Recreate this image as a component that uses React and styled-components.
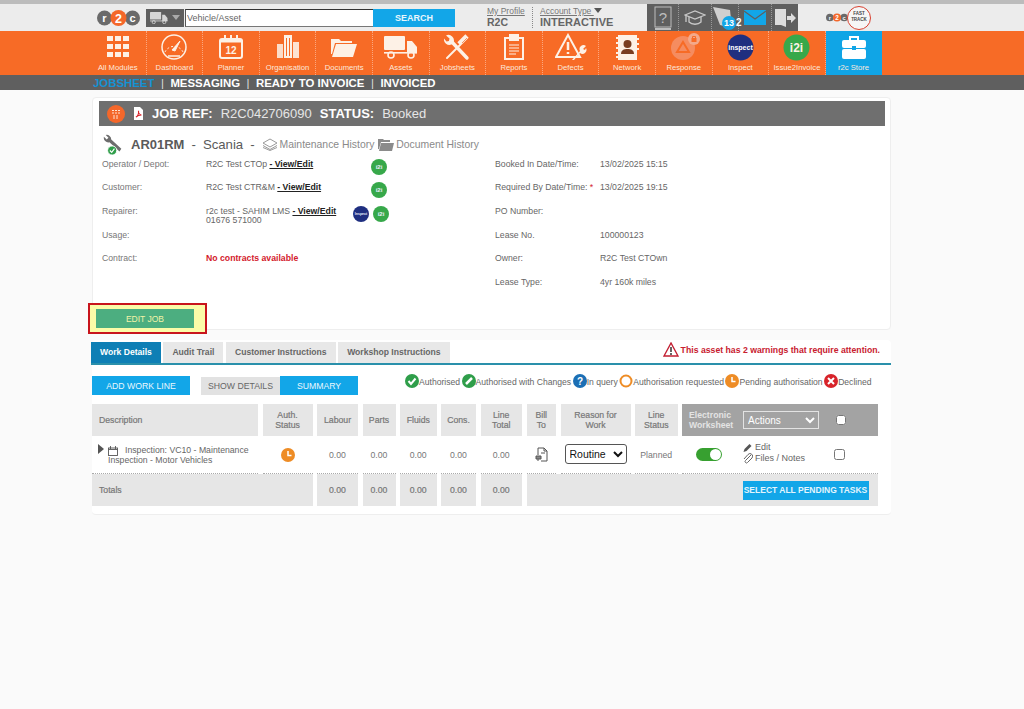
import styled, { createGlobalStyle } from "styled-components";

const GlobalStyle = createGlobalStyle`
  body {
    margin: 0;
    background: #fafafa;
    font-family: "Liberation Sans", Arial, sans-serif;
    color: #666;
  }
`;

//MARK --> drawn icons
const Logo = ({ small }) => (
  <svg width={small ? 22 : 43} height={small ? 9 : 16} viewBox="0 0 86 32">
    <circle cx="15" cy="16" r="15" fill="#6a6a6a" />
    <circle cx="71" cy="16" r="15" fill="#6a6a6a" />
    <circle cx="43" cy="16" r="16" fill="#f4672a" />
    <text x="15" y="24" fontSize="22" fontWeight="700" fill="#fff" textAnchor="middle">r</text>
    <text x="43" y="25" fontSize="25" fontWeight="700" fill="#fff" textAnchor="middle">2</text>
    <text x="71" y="24" fontSize="22" fontWeight="700" fill="#fff" textAnchor="middle">c</text>
  </svg>
);

const TruckIcon = ({ width = 34, fill = "#fdf1e6" }) => (
  <svg width={width} height={(width * 26) / 34} viewBox="0 0 34 26">
    <rect x="0" y="2" width="21" height="14" rx="1" fill={fill} />
    <path d="M23 7h5l5 6v6H23z" fill={fill} />
    <rect x="0" y="18" width="33" height="1.6" fill={fill} />
    <circle cx="7" cy="21" r="3" fill="none" stroke={fill} strokeWidth="1.6" />
    <circle cx="27" cy="21" r="3" fill="none" stroke={fill} strokeWidth="1.6" />
  </svg>
);

const icons = {
  modules: (
    <svg width="26" height="26" viewBox="0 0 26 26" fill="#fdf1e6">
      {[2, 10, 18].map((y) =>
        [2, 10, 18].map((x) => <rect key={`${x}-${y}`} x={x} y={y} width="6" height="5" />)
      )}
    </svg>
  ),
  gauge: (
    <svg width="28" height="28" viewBox="0 0 28 28" fill="none" stroke="#fdf1e6">
      <circle cx="14" cy="14" r="12" strokeWidth="1.5" />
      <path d="M5 19a10 10 0 0 1 18 0" strokeWidth="1" strokeDasharray="2 2" />
      <path d="M12 17l8-9-5 10z" fill="#fdf1e6" />
      <path d="M8 23h12" strokeWidth="1.5" />
    </svg>
  ),
  planner: (
    <svg width="26" height="26" viewBox="0 0 26 26" fill="none" stroke="#fdf1e6">
      <rect x="2" y="5" width="22" height="19" rx="2" strokeWidth="2" />
      <path d="M2 8h22V6H2z" fill="#fdf1e6" />
      <path d="M7 1v6M13 1v6M19 1v6" strokeWidth="2" />
      <text x="13" y="20" fontSize="10" fontWeight="700" fill="#fdf1e6" stroke="none" textAnchor="middle">12</text>
    </svg>
  ),
  organisation: (
    <svg width="26" height="26" viewBox="0 0 26 26" fill="#fdf1e6">
      <rect x="9" y="1" width="8" height="23" />
      <rect x="2" y="10" width="6" height="14" opacity="0.85" />
      <rect x="18" y="8" width="6" height="16" opacity="0.9" />
      <path d="M11 4h1v18h-1zM14 4h1v18h-1z" fill="#f76b26" />
    </svg>
  ),
  folder: (
    <svg width="28" height="26" viewBox="0 0 28 26" fill="#fdf1e6">
      <path d="M1 5h8l2 2h11v2H5L2 20H1z" />
      <path d="M6 10h21l-4 13H2z" />
    </svg>
  ),
  truck: <TruckIcon />,
  tools: (
    <svg width="26" height="27" viewBox="0 0 26 27" fill="none" stroke="#fdf1e6">
      <path d="M7 7l16 17" strokeWidth="3.4" strokeLinecap="round" />
      <path d="M2 1.500l3.500 3-.5 2.500-2.500.5L0 4.500a5.500 5.500 0 0 0 7.500 6l2-2A5.500 5.500 0 0 0 2 1.500z" fill="#fdf1e6" stroke="none" />
      <path d="M3 24L16 11" strokeWidth="2" strokeLinecap="round" />
      <path d="M15 10l8-8" strokeWidth="4.600" />
      <path d="M18 9l5-5" stroke="#f76b26" strokeWidth="0.7" />
    </svg>
  ),
  clipboard: (
    <svg width="24" height="27" viewBox="0 0 24 27" fill="none" stroke="#fdf1e6" strokeWidth="2">
      <rect x="3" y="4" width="18" height="21" />
      <path d="M8 1h8v5H8z" fill="#fdf1e6" />
      <path d="M7 11h10M7 14h10M7 17h10M7 20h7" strokeWidth="1" />
    </svg>
  ),
  defects: (
    <svg width="32" height="28" viewBox="0 0 32 28" fill="none" stroke="#fdf1e6">
      <path d="M13 2L1 24h24z" strokeWidth="2" />
      <path d="M13 9v8M13 19v2" strokeWidth="2.5" />
      <path d="M17 27l8-9a4 4 0 0 1 6-5l-3 3 2 1 1-2a4 4 0 0 1-6 5l-6 7z" fill="#fdf1e6" stroke="none" />
    </svg>
  ),
  network: (
    <svg width="24" height="27" viewBox="0 0 24 27">
      <rect x="3" y="1" width="19" height="25" fill="#fdf1e6" />
      <path d="M1 4h4M1 9h4M1 14h4M1 19h4M1 23h4M21 5h3M21 10h3M21 15h3" stroke="#fdf1e6" strokeWidth="2" />
      <circle cx="12.5" cy="10" r="4" fill="#7a3d20" />
      <path d="M6 20c0-4 3-5 6.5-5s6.5 1 6.5 5z" fill="#7a3d20" />
    </svg>
  ),
  response: (
    <svg width="36" height="28" viewBox="0 0 36 28">
      <circle cx="17" cy="15" r="12" fill="#f58c60" />
      <path d="M17 9l6 10H11z" fill="none" stroke="#f76b26" strokeWidth="2" />
      <circle cx="28" cy="6" r="6" fill="#f3a98a" />
      <rect x="25.5" y="5" width="5" height="4" fill="#f76b26" />
      <path d="M26.5 5V3.5h3V5" fill="none" stroke="#f76b26" />
    </svg>
  ),
  inspect: (
    <svg width="27" height="27" viewBox="0 0 27 27">
      <circle cx="13.5" cy="13.5" r="13" fill="#1f2f80" />
      <text x="13.5" y="16" fontSize="7" fontWeight="700" fill="#fff" textAnchor="middle">inspect</text>
    </svg>
  ),
  i2i: (
    <svg width="27" height="27" viewBox="0 0 27 27">
      <circle cx="13.5" cy="13.5" r="13" fill="#37a84a" />
      <text x="13.5" y="18" fontSize="12" fontWeight="700" fill="#fdf1e6" textAnchor="middle">i2i</text>
    </svg>
  ),
  store: (
    <svg width="26" height="26" viewBox="0 0 26 26" fill="#fff">
      <path d="M9 6V3h8v3" fill="none" stroke="#fff" strokeWidth="2" />
      <rect x="1" y="6" width="24" height="8" rx="2" />
      <rect x="1" y="15" width="24" height="10" rx="2" />
      <rect x="11" y="12" width="4" height="4" fill="#10a5e6" />
    </svg>
  ),
};

const BookIcon = () => (
  <svg width="18" height="24" viewBox="0 0 18 24" fill="none" stroke="#bdbdbd">
    <rect x="1" y="1" width="16" height="20" />
    <path d="M1 23h16" strokeWidth="2" />
    <text x="9" y="17" fontSize="15" fill="#bdbdbd" stroke="none" textAnchor="middle">?</text>
  </svg>
);

const CapIcon = () => (
  <svg width="22" height="16" viewBox="0 0 22 16" fill="none" stroke="#c9c9c9" strokeWidth="1.3">
    <path d="M1 5l10-4 10 4-10 4z" />
    <path d="M5 7v5c3 3 9 3 12 0V7M2 5v7" />
  </svg>
);

const DoorIcon = () => (
  <svg width="22" height="20" viewBox="0 0 22 20" fill="#ddd">
    <path d="M1 1h11v18l-5-2H1z" />
    <path d="M13 8h4V5l5 5-5 5v-3h-4z" />
  </svg>
);

const MailIcon = () => (
  <svg width="22" height="15" viewBox="0 0 22 15">
    <rect width="22" height="15" fill="#12a6e8" />
    <path d="M0 1l11 8 11-8" fill="none" stroke="#5f5f5f" strokeWidth="1.2" />
  </svg>
);

const MapIcon = () => (
  <svg width="20" height="24" viewBox="0 0 20 24" fill="#cfcfcf">
    <path d="M1 1l17 3 2 18-12-3z" />
  </svg>
);

const JobCalIcon = () => (
  <svg width="18" height="18" viewBox="0 0 18 18">
    <circle cx="9" cy="9" r="9" fill="#f4672a" />
    <path d="M5 5.500h8M5 8h8M6 11h6M6 13h6" stroke="#ffe3d2" strokeWidth="1" strokeDasharray="2 1" />
  </svg>
);

const PdfIcon = () => (
  <svg width="11" height="13" viewBox="0 0 11 13">
    <path d="M1 0h6l3 3v10H1z" fill="#fff" />
    <path d="M3 10c2-1 3-4 2.5-6C5 6 7 8 8.500 8 6.500 8 4 9 3 10z" fill="none" stroke="#d8232a" strokeWidth="1.1" />
  </svg>
);

const WrenchStatus = () => (
  <svg width="22" height="22" viewBox="0 0 24 24">
    <path d="M3 1l3 3-2 2-3-3a5 5 0 0 0 6 6l11 10 2-3L9 6a5 5 0 0 0-6-5z" fill="#6d6d6d" />
    <circle cx="10" cy="18" r="5" fill="#2f9e4a" stroke="#fff" />
    <path d="M7.500 18l2 2 3-4" stroke="#fff" fill="none" strokeWidth="1.2" />
  </svg>
);

const LayersIcon = () => (
  <svg width="16" height="13" viewBox="0 0 16 13" fill="none" stroke="#9a9a9a">
    <path d="M1 5l7-4 7 4-7 4z" />
    <path d="M1 7.500l7 4 7-4" />
    <path d="M1 9.500l7 3 7-3" />
  </svg>
);

const FolderIcon = () => (
  <svg width="16" height="12" viewBox="0 0 16 12" fill="#8b8b8b">
    <path d="M0 0h5l1 1h6v2H3L1 10H0z" />
    <path d="M3 4h13l-2 8H1z" />
  </svg>
);

const WarnIcon = () => (
  <svg width="16" height="15" viewBox="0 0 16 15" fill="none">
    <path d="M8 1L1 14h14z" stroke="#c21f32" strokeWidth="1.4" />
    <path d="M8 5v5M8 11v2" stroke="#333" strokeWidth="1.5" />
  </svg>
);

const StatusDot = ({ kind }) => {
  const colour = { ok: "#2f9e4a", edit: "#2f9e4a", query: "#1b6fb5", req: "#ee8c25", pend: "#ee8c25", no: "#d8232a" }[kind];
  return (
    <svg width="14" height="14" viewBox="0 0 14 14">
      {kind === "req" ? (
        <circle cx="7" cy="7" r="5.500" fill="#fff" stroke={colour} strokeWidth="2" />
      ) : (
        <circle cx="7" cy="7" r="7" fill={colour} />
      )}
      {kind === "ok" && <path d="M3.500 7l2.500 3 4.500-5.500" stroke="#fff" strokeWidth="2" fill="none" />}
      {kind === "edit" && <path d="M4 10l6-6" stroke="#fff" strokeWidth="2.500" />}
      {kind === "query" && <text x="7" y="11" fontSize="10" fontWeight="700" fill="#fff" textAnchor="middle">?</text>}
      {kind === "pend" && <path d="M7 3v4.500h3.500" stroke="#fff" strokeWidth="1.500" fill="none" />}
      {kind === "no" && <path d="M4 4l6 6M10 4l-6 6" stroke="#fff" strokeWidth="2" />}
    </svg>
  );
};

const CalSmall = () => (
  <svg width="10" height="10" viewBox="0 0 10 10" fill="none" stroke="#555" strokeWidth="0.9">
    <rect x="0.500" y="2" width="9" height="7.500" />
    <path d="M2.500 0v3M7.500 0v3M0.500 3.500h9" />
  </svg>
);

const BillIcon = () => (
  <svg width="13" height="15" viewBox="0 0 13 15" fill="none" stroke="#555">
    <path d="M3 8V1h6l3 3v10H6" />
    <path d="M1 9h5v3H1zM3 12v2" fill="#888" />
    <path d="M9 1v3h3M6 6h4" />
  </svg>
);

const PencilIcon = () => (
  <svg width="10" height="9" viewBox="0 0 9 9" fill="#555">
    <path d="M0 9l1-3 5-5 2 2-5 5z" />
  </svg>
);

const ClipIcon = () => (
  <svg width="10" height="11" viewBox="0 0 10 11" fill="none" stroke="#666">
    <path d="M8 2L2.500 7.500a1.200 1.200 0 0 0 2 2L9 5a2.500 2.500 0 0 0-4-3.500L1 6" />
  </svg>
);

//MARK --> data
const modules = [
  ["All Modules", "modules"],
  ["Dashboard", "gauge"],
  ["Planner", "planner"],
  ["Organisation", "organisation"],
  ["Documents", "folder"],
  ["Assets", "truck"],
  ["Jobsheets", "tools"],
  ["Reports", "clipboard"],
  ["Defects", "defects"],
  ["Network", "network"],
  ["Response", "response"],
  ["Inspect", "inspect"],
  ["Issue2Invoice", "i2i"],
  ["r2c Store", "store"],
];

const legend = [
  ["ok", "Authorised"],
  ["edit", "Authorised with Changes"],
  ["query", "In query"],
  ["req", "Authorisation requested"],
  ["pend", "Pending authorisation"],
  ["no", "Declined"],
];

const rightRows = [
  ["Booked In Date/Time:", "13/02/2025 15:15"],
  ["Required By Date/Time:", "13/02/2025 19:15", true],
  ["PO Number:", ""],
  ["Lease No.", "100000123"],
  ["Owner:", "R2C Test CTOwn"],
  ["Lease Type:", "4yr 160k miles"],
];

function App() {
  return (
    <>
      <GlobalStyle />
      <TopBar>
        <Logo />
        <SearchGroup>
          <AssetPicker>
            <TruckIcon width={18} fill="#d6d6d6" />
            <Caret />
          </AssetPicker>
          <SearchInput placeholder="Vehicle/Asset" />
          <SearchButton>SEARCH</SearchButton>
        </SearchGroup>
        <Profile>
          <ProfileLink>My Profile</ProfileLink>
          <ProfileValue>R2C</ProfileValue>
        </Profile>
        <Account>
          <ProfileLink>
            Account Type <DarkCaret />
          </ProfileLink>
          <AccountValue>INTERACTIVE</AccountValue>
        </Account>
        <ToolBlock>
          <ToolCell $w={32}><BookIcon /></ToolCell>
          <ToolCell $w={33}><CapIcon /></ToolCell>
          <ToolCell $w={27} $start>
            <MapIcon />
            <CountBadge>13</CountBadge>
            <CountRest>2</CountRest>
          </ToolCell>
          <ToolCell $w={33}><MailIcon /></ToolCell>
          <ToolCell $w={26} $last><DoorIcon /></ToolCell>
        </ToolBlock>
        <FastTrack>
          <Logo small />
          <FastRing>FAST<br />TRACK</FastRing>
        </FastTrack>
      </TopBar>

      <ModuleBar>
        {modules.map(([label, icon]) => (
          <ModuleItem key={label} $active={icon === "store"}>
            <ModuleIcon>{icons[icon]}</ModuleIcon>
            {label}
          </ModuleItem>
        ))}
      </ModuleBar>

      <SubNav>
        <SubLink $active>JOBSHEET</SubLink>
        <SubSep>|</SubSep>
        <SubLink>MESSAGING</SubLink>
        <SubSep>|</SubSep>
        <SubLink>READY TO INVOICE</SubLink>
        <SubSep>|</SubSep>
        <SubLink>INVOICED</SubLink>
      </SubNav>

      <JobCard>
        <JobBar>
          <JobCalIcon />
          <PdfIcon />
          <JobStrong>JOB REF:</JobStrong>
          <JobValue>R2C042706090</JobValue>
          <JobStrong>STATUS:</JobStrong>
          <JobValue>Booked</JobValue>
        </JobBar>
        <VehicleLine>
          <WrenchStatus />
          <VehicleReg>AR01RM</VehicleReg>
          <VehicleText>-</VehicleText>
          <VehicleText>Scania</VehicleText>
          <VehicleText>-</VehicleText>
          <HistoryLink><LayersIcon />Maintenance History</HistoryLink>
          <HistoryLink><FolderIcon />Document History</HistoryLink>
        </VehicleLine>
        <InfoColumns>
          <div>
            <InfoRow>
              <InfoLabel>Operator / Depot:</InfoLabel>
              <span>R2C Test CTOp <ViewEdit>- View/Edit</ViewEdit></span>
              <Badges $inset><Badge>i2i</Badge></Badges>
            </InfoRow>
            <InfoRow>
              <InfoLabel>Customer:</InfoLabel>
              <span>R2C Test CTR&amp;M <ViewEdit>- View/Edit</ViewEdit></span>
              <Badges $inset><Badge>i2i</Badge></Badges>
            </InfoRow>
            <InfoRow>
              <InfoLabel>Repairer:</InfoLabel>
              <span>r2c test - SAHIM LMS <ViewEdit>- View/Edit</ViewEdit><br />01676 571000</span>
              <Badges><Badge $navy>Inspect</Badge><Badge>i2i</Badge></Badges>
            </InfoRow>
            <InfoRow>
              <InfoLabel>Usage:</InfoLabel>
            </InfoRow>
            <InfoRow>
              <InfoLabel>Contract:</InfoLabel>
              <NoContract>No contracts available</NoContract>
            </InfoRow>
            <InfoRow />
          </div>
          <div>
            {rightRows.map(([label, value, required]) => (
              <RightRow key={label}>
                <span>{label}{required && <Required> *</Required>}</span>
                <span>{value}</span>
              </RightRow>
            ))}
          </div>
        </InfoColumns>
        <EditHighlight>
          <EditButton>EDIT JOB</EditButton>
        </EditHighlight>
      </JobCard>

      <WorkCard>
        <TabRow>
          <Tab $active>Work Details</Tab>
          <Tab>Audit Trail</Tab>
          <Tab>Customer Instructions</Tab>
          <Tab>Workshop Instructions</Tab>
          <Warning><WarnIcon />This asset has 2 warnings that require attention.</Warning>
        </TabRow>
        <ActionRow>
          <BlueButton $w={98}>ADD WORK LINE</BlueButton>
          <ToggleGroup>
            <GrayButton>SHOW DETAILS</GrayButton>
            <BlueButton $w={78}>SUMMARY</BlueButton>
          </ToggleGroup>
          <Legend>
            {legend.map(([kind, label]) => (
              <LegendItem key={kind}><StatusDot kind={kind} />{label}</LegendItem>
            ))}
          </Legend>
        </ActionRow>
        <LinesTable>
          <HeadCell $left>Description</HeadCell>
          <HeadCell>Auth.<br />Status</HeadCell>
          <HeadCell>Labour</HeadCell>
          <HeadCell>Parts</HeadCell>
          <HeadCell>Fluids</HeadCell>
          <HeadCell>Cons.</HeadCell>
          <HeadCell>Line<br />Total</HeadCell>
          <HeadCell>Bill<br />To</HeadCell>
          <HeadCell>Reason for<br />Work</HeadCell>
          <HeadCell>Line<br />Status</HeadCell>
          <WorksheetHead>
            <WorksheetTitle>Electronic<br />Worksheet</WorksheetTitle>
            <ActionsSelect defaultValue="Actions">
              <option>Actions</option>
            </ActionsSelect>
            <HeadCheck type="checkbox" />
          </WorksheetHead>

          <DescCell>
            <Expander />
            <div>
              <DescFirst>
                <CalSmall />
                <span>Inspection: VC10 - Maintenance</span>
              </DescFirst>
              Inspection - Motor Vehicles
            </div>
          </DescCell>
          <BodyCell><StatusDot kind="pend" /></BodyCell>
          <BodyCell>0.00</BodyCell>
          <BodyCell>0.00</BodyCell>
          <BodyCell>0.00</BodyCell>
          <BodyCell>0.00</BodyCell>
          <BodyCell>0.00</BodyCell>
          <BodyCell><BillIcon /></BodyCell>
          <BodyCell>
            <ReasonSelect defaultValue="Routine">
              <option>Routine</option>
            </ReasonSelect>
          </BodyCell>
          <BodyCell>Planned</BodyCell>
          <WorksheetBody>
            <Switch><Knob /></Switch>
            <RowLinks>
              <RowLink><PencilIcon />Edit</RowLink>
              <RowLink><ClipIcon />Files / Notes</RowLink>
            </RowLinks>
            <RowCheck type="checkbox" />
          </WorksheetBody>

          <TotalCell $left $span={2}>Totals</TotalCell>
          <TotalCell>0.00</TotalCell>
          <TotalCell>0.00</TotalCell>
          <TotalCell>0.00</TotalCell>
          <TotalCell>0.00</TotalCell>
          <TotalCell>0.00</TotalCell>
          <TotalAction>
            <SelectAll>SELECT ALL PENDING TASKS</SelectAll>
          </TotalAction>
        </LinesTable>
      </WorkCard>
    </>
  );
}

const TopBar = styled.header`
  display: flex;
  align-items: center;
  height: 27px;
  padding-left: 97px;
  background: #ececec;
  border-top: 4px solid #bcbcbc;
`;

const SearchGroup = styled.div`
  display: flex;
  height: 18px;
  margin-left: 6px;
`;

const AssetPicker = styled.div`
  display: flex;
  align-items: center;
  gap: 4px;
  width: 38px;
  padding-left: 4px;
  box-sizing: border-box;
  background: #5f5f5f;
`;

const Caret = styled.span`
  border-left: 4px solid transparent;
  border-right: 4px solid transparent;
  border-top: 5px solid #aaa;
`;

const DarkCaret = styled(Caret)`
  display: inline-block;
  border-top-color: #555;
  vertical-align: 1px;
`;

const SearchInput = styled.input`
  width: 188px;
  margin-left: 1px;
  padding: 0 1px;
  box-sizing: border-box;
  border: 0;
  border-top: 1px solid #333;
  border-bottom: 1px solid #777;
  border-left: 1px solid #555;
  outline: 0;
  font: 9px "Liberation Sans", Arial, sans-serif;
  background: #fff;
  &::placeholder {
    color: #666;
  }
`;

const SearchButton = styled.button`
  width: 82px;
  padding: 0;
  border: 0;
  background: #12a6e8;
  color: #e8f6fd;
  font: 700 9px "Liberation Sans", Arial, sans-serif;
`;

const Profile = styled.div`
  width: 45px;
  margin-left: 32px;
  border-right: 1px dotted #888;
`;

const ProfileLink = styled.div`
  color: #777;
  font-size: 8.5px;
  line-height: 9px;
  text-decoration: underline;
`;

const ProfileValue = styled.div`
  color: #666;
  font-size: 10.5px;
  font-weight: 700;
  line-height: 12px;
`;

const Account = styled.div`
  width: 107px;
  margin-left: 7px;
`;

const AccountValue = styled(ProfileValue)`
  font-size: 11px;
`;

const ToolBlock = styled.div`
  display: flex;
  height: 27px;
  background: #5f5f5f;
`;

const ToolCell = styled.div`
  position: relative;
  display: flex;
  align-items: center;
  justify-content: ${(p) => (p.$start ? "flex-start" : "center")};
  width: ${(p) => p.$w}px;
  box-sizing: border-box;
  border-right: ${(p) => (p.$last ? "0" : "1px dotted #999")};
`;

const CountBadge = styled.span`
  position: absolute;
  left: 10px;
  bottom: 1px;
  width: 14px;
  height: 14px;
  border-radius: 50%;
  background: #12a6e8;
  color: #fff;
  font-size: 9px;
  font-weight: 700;
  line-height: 14px;
  text-align: center;
`;

const CountRest = styled.span`
  position: absolute;
  left: 24px;
  bottom: 3px;
  color: #fff;
  font-size: 10px;
  font-weight: 700;
`;

const FastTrack = styled.div`
  display: flex;
  align-items: center;
  margin-left: 28px;
`;

const FastRing = styled.div`
  width: 24px;
  height: 24px;
  margin-left: -1px;
  box-sizing: border-box;
  border: 1.5px solid #d8402f;
  border-radius: 50%;
  background: #f6f6f6;
  color: #444;
  font-size: 4.5px;
  font-weight: 700;
  line-height: 6px;
  text-align: center;
  padding-top: 4px;
`;

const ModuleBar = styled.nav`
  display: flex;
  height: 44px;
  padding-left: 90px;
  background: #f76b26;
`;

const ModuleItem = styled.div`
  display: flex;
  flex-direction: column;
  align-items: center;
  width: 56.6px;
  box-sizing: border-box;
  border-right: 1px dotted ${(p) => (p.$active ? "transparent" : "#fba77f")};
  background: ${(p) => (p.$active ? "#10a5e6" : "transparent")};
  color: #fde9dc;
  font-size: 7.7px;
  white-space: nowrap;
  line-height: 9px;
`;

const ModuleIcon = styled.div`
  display: flex;
  align-items: center;
  justify-content: center;
  height: 32px;
`;

const SubNav = styled.div`
  display: flex;
  align-items: center;
  height: 15px;
  padding-left: 93px;
  background: #5f5f5f;
  font-size: 11.4px;
  font-weight: 700;
  color: #fff;
`;

const SubLink = styled.span`
  color: ${(p) => (p.$active ? "#1592d4" : "#fff")};
`;

const SubSep = styled.span`
  margin: 0 6.5px;
  font-weight: 400;
  color: #ddd;
`;

const JobCard = styled.section`
  width: 799px;
  height: 233px;
  margin: 7px 0 0 92px;
  padding: 3px 5px 0 6px;
  box-sizing: border-box;
  background: #fff;
  border: 1px solid #eee;
  border-radius: 4px;
`;

const JobBar = styled.div`
  display: flex;
  align-items: center;
  gap: 8px;
  height: 25px;
  padding-left: 8px;
  background: #6f6f6f;
`;

const JobStrong = styled.strong`
  color: #fff;
  font-size: 13px;
`;

const JobValue = styled.span`
  color: #e6e6e6;
  font-size: 13px;
`;

const VehicleLine = styled.div`
  display: flex;
  align-items: center;
  gap: 7px;
  height: 31px;
  margin-top: 3px;
  padding-left: 4px;
`;

const VehicleReg = styled.strong`
  margin-left: -1px;
  color: #5a5a5a;
  font-size: 13px;
`;

const VehicleText = styled.span`
  color: #5a5a5a;
  font-size: 13.2px;
`;

const HistoryLink = styled.span`
  display: flex;
  align-items: center;
  gap: 2px;
  color: #8a8a8a;
  font-size: 10.4px;
  & + & {
    margin-left: -3px;
  }
`;

const InfoColumns = styled.div`
  display: grid;
  grid-template-columns: 393px 1fr;
  margin-top: -0.5px;
  padding-left: 3px;
  font-size: 8.7px;
  line-height: 9.5px;
`;

const InfoRow = styled.div`
  display: grid;
  grid-template-columns: 104px 145px 38px;
  height: 23.7px;
`;

const InfoLabel = styled.span`
  color: #777;
`;

const ViewEdit = styled.a`
  color: #222;
  font-weight: 700;
  text-decoration: underline;
`;

const NoContract = styled.strong`
  color: #d3202c;
`;

const Badges = styled.div`
  display: flex;
  justify-content: flex-end;
  gap: 4px;
  margin-top: -1px;
  margin-right: ${(p) => (p.$inset ? "2px" : "0")};
`;

const Badge = styled.span`
  width: 16px;
  height: 16px;
  border-radius: 50%;
  background: ${(p) => (p.$navy ? "#1f2f80" : "#37a84a")};
  color: #eef;
  font-size: ${(p) => (p.$navy ? "3.5px" : "6px")};
  font-weight: 700;
  line-height: 16px;
  text-align: center;
`;

const RightRow = styled.div`
  display: grid;
  grid-template-columns: 105px 1fr;
  height: 23.7px;
`;

const Required = styled.span`
  color: #d3202c;
`;

const EditHighlight = styled.div`
  display: flex;
  align-items: center;
  width: 119px;
  height: 31px;
  margin: 1.5px 0 0 -11px;
  padding-left: 6px;
  box-sizing: border-box;
  background: #fbfba8;
  border: 2px solid #c8141c;
`;

const EditButton = styled.button`
  width: 98px;
  height: 19px;
  padding: 0;
  border: 0;
  background: #4cae80;
  color: #f3f3a8;
  font: 8.5px "Liberation Sans", Arial, sans-serif;
`;

const WorkCard = styled.section`
  width: 799px;
  height: 175px;
  margin: 10px 0 0 92px;
  box-sizing: border-box;
  background: #fff;
  border-bottom: 1px solid #eee;
  border-radius: 4px;
`;

const TabRow = styled.div`
  display: flex;
  align-items: flex-start;
  gap: 2.5px;
  height: 21px;
  margin-left: -1px;
  padding-top: 2px;
  border-bottom: 2px solid #2a90ab;
`;

const Tab = styled.div`
  height: 21px;
  padding: 0 9px;
  background: ${(p) => (p.$active ? "#0e7fb5" : "#e8e8e8")};
  color: ${(p) => (p.$active ? "#fff" : "#666")};
  font-size: 8.6px;
  font-weight: 700;
  line-height: 21px;
`;

const Warning = styled.div`
  display: flex;
  align-items: center;
  gap: 2px;
  margin-left: auto;
  margin-right: 11px;
  color: #c8202f;
  font-size: 8.7px;
  font-weight: 700;
`;

const ActionRow = styled.div`
  display: flex;
  align-items: flex-start;
  height: 39px;
  padding-top: 11px;
  box-sizing: border-box;
`;

const BlueButton = styled.button`
  width: ${(p) => p.$w}px;
  height: 19px;
  padding: 0;
  border: 0;
  background: #12a6e8;
  color: #eaf7fd;
  font: 8.7px "Liberation Sans", Arial, sans-serif;
`;

const ToggleGroup = styled.div`
  display: flex;
  margin-left: 11px;
`;

const GrayButton = styled(BlueButton)`
  width: 79px;
  height: 18px;
  margin-top: 1px;
  background: #e2e2e2;
  color: #666;
`;

const Legend = styled.div`
  display: flex;
  gap: 1.5px;
  margin-left: 47px;
  margin-top: -2px;
`;

const LegendItem = styled.span`
  display: flex;
  align-items: flex-start;
  color: #666;
  font-size: 8.6px;
  line-height: 16px;
`;

const LinesTable = styled.div`
  display: grid;
  grid-template-columns: 166px 50px 41px 33px 36.500px 35px 41.500px 29.500px 70px 42.500px 195.500px;
  grid-template-rows: 32px 38px 32px;
  column-gap: 4.5px;
  width: 786px;
  font-size: 8.7px;
`;

const HeadCell = styled.div`
  display: flex;
  align-items: center;
  justify-content: ${(p) => (p.$left ? "flex-start" : "center")};
  padding-left: ${(p) => (p.$left ? "7px" : "0")};
  background: #e6e6e6;
  color: #777;
  font-weight: 400;
  line-height: 10px;
  text-align: center;
  -webkit-text-stroke: 0.2px #777;
`;

const WorksheetHead = styled.div`
  display: flex;
  align-items: center;
  padding-left: 7px;
  background: #a3a3a3;
`;

const WorksheetTitle = styled.div`
  width: 54px;
  color: #e4e4e4;
  font-weight: 700;
  line-height: 10px;
`;

const ActionsSelect = styled.select`
  width: 76px;
  height: 18px;
  background: transparent;
  border: 1px solid #e3e3e3;
  color: #fff;
  font: 10px "Liberation Sans", Arial, sans-serif;
`;

const HeadCheck = styled.input`
  width: 10px;
  height: 10px;
  margin: 0 0 0 17px;
`;

const RowCell = styled.div`
  border-bottom: 1px dotted #aaa;
`;

const DescCell = styled(RowCell)`
  display: flex;
  align-items: flex-start;
  gap: 4px;
  padding: 8px 0 0 6px;
  line-height: 9.500px;
  color: #666;
`;

const DescFirst = styled.div`
  display: flex;
  align-items: center;
  gap: 7px;
  padding-top: 2px;
`;

const Expander = styled.span`
  border-top: 5px solid transparent;
  border-bottom: 5px solid transparent;
  border-left: 6px solid #555;
`;

const BodyCell = styled(RowCell)`
  display: flex;
  align-items: center;
  justify-content: center;
  color: #777;
`;

const ReasonSelect = styled.select`
  width: 62px;
  height: 20px;
  margin-bottom: 1px;
  background: #fff;
  border: 1px solid #555;
  border-radius: 3px;
  color: #111;
  font: 10.5px "Liberation Sans", Arial, sans-serif;
`;

const WorksheetBody = styled(RowCell)`
  display: flex;
  align-items: center;
  padding-left: 14px;
`;

const Switch = styled.div`
  display: flex;
  justify-content: flex-end;
  align-items: center;
  width: 26px;
  height: 13px;
  padding-right: 1px;
  box-sizing: border-box;
  border-radius: 7px;
  background: #37a030;
`;

const Knob = styled.span`
  width: 11px;
  height: 11px;
  border-radius: 50%;
  background: #fff;
`;

const RowLinks = styled.div`
  margin: -3px 0 0 21px;
  width: 91px;
`;

const RowLink = styled.div`
  display: flex;
  align-items: center;
  gap: 2px;
  font-size: 9px;
  line-height: 11.5px;
  color: #666;
`;

const RowCheck = styled.input`
  width: 11px;
  height: 11px;
  margin: 0;
`;

const TotalCell = styled.div`
  display: flex;
  align-items: center;
  justify-content: ${(p) => (p.$left ? "flex-start" : "center")};
  grid-column: span ${(p) => p.$span || 1};
  padding-left: ${(p) => (p.$left ? "7px" : "0")};
  background: #e6e6e6;
  color: #777;
  -webkit-text-stroke: 0.2px #777;
`;

const TotalAction = styled.div`
  grid-column: span 4;
  display: flex;
  align-items: center;
  justify-content: flex-end;
  padding-right: 9px;
  background: #e6e6e6;
`;

const SelectAll = styled.button`
  width: 126px;
  height: 19px;
  padding: 0;
  border: 0;
  background: #12a6e8;
  color: #e4f5fd;
  font: 700 8.5px "Liberation Sans", Arial, sans-serif;
`;

export default App;
